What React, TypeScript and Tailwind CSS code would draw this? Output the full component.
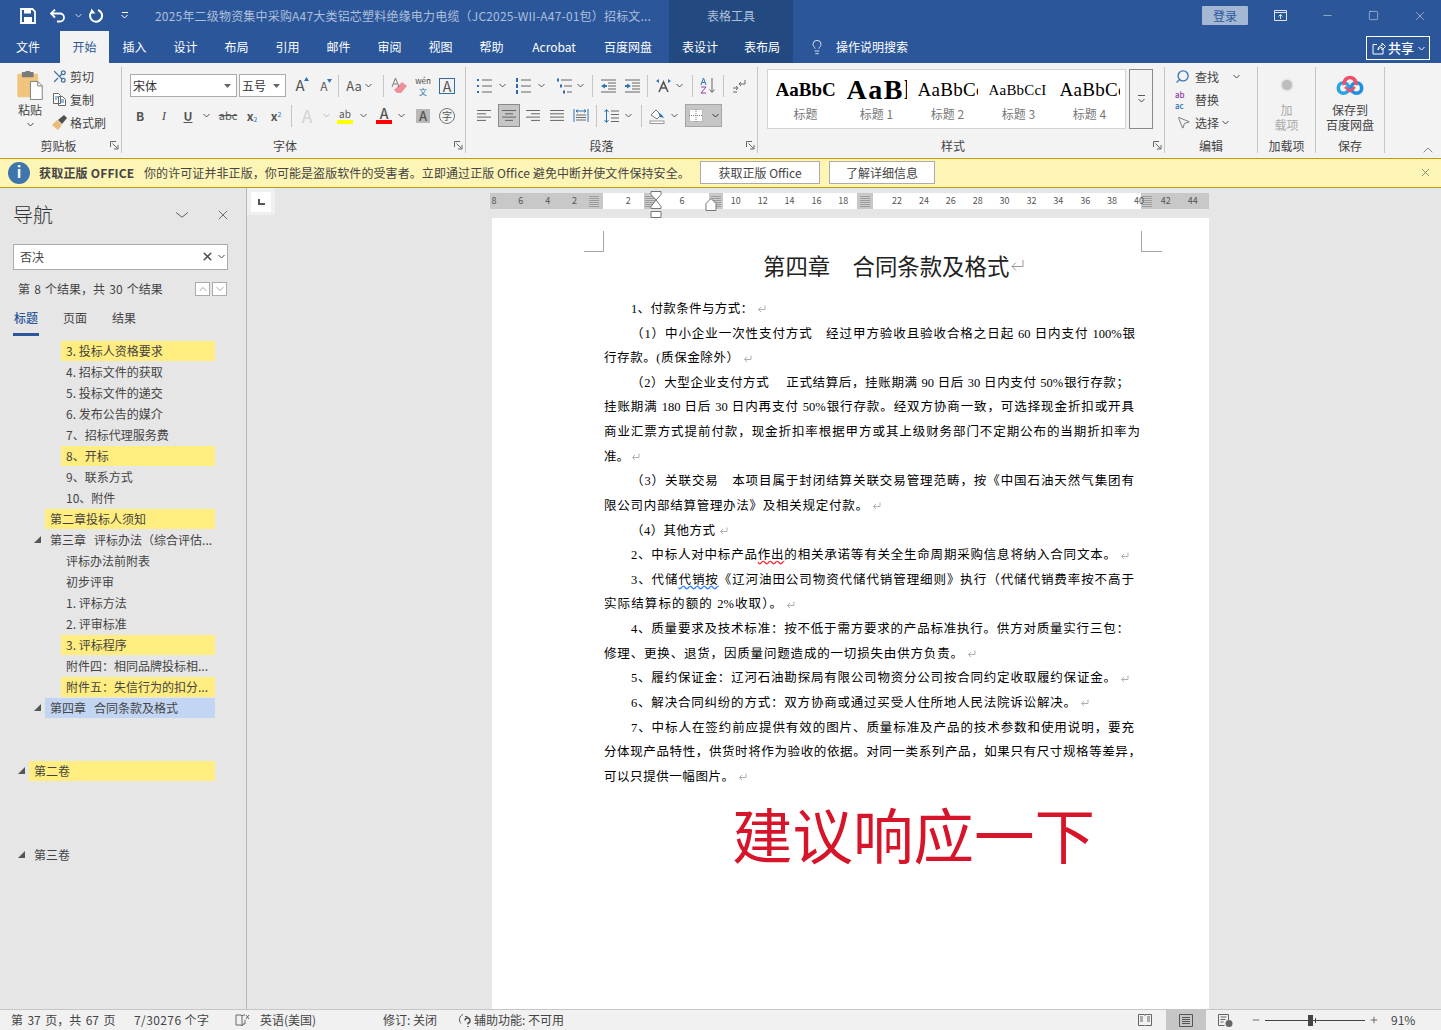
import type { ReactNode } from "react";
import { ChevronDown, ChevronUp, Lightbulb, MousePointer2, Minus, Plus, Scissors, Search, Square, X } from "lucide-react";

const Chev = ({ className = "text-[#555]" }: { className?: string }) => (
    <svg width="7" height="5" viewBox="0 0 7 5" className={className}>
        <path d="M0.5 1l3 3 3-3" fill="none" stroke="currentColor" strokeWidth="1" />
    </svg>
);

const Cell = ({ w = "w-[24px]", className = "", children }: { w?: string; className?: string; children?: ReactNode }) => (
    <div className={`flex h-[23px] shrink-0 items-center justify-center ${w} ${className}`}>{children}</div>
);

const Sep = ({ className = "" }: { className?: string }) => <div className={`h-[22px] w-px shrink-0 bg-[#c6c6c6] ${className}`} />;

const Launcher = () => (
    <svg width="9" height="9" viewBox="0 0 9 9" className="absolute bottom-[3px] right-[2px] text-[#666]">
        <path d="M0.5 6V0.5H6M2.5 2.5L7.5 7.5M8 4V8H4" fill="none" stroke="currentColor" />
    </svg>
);

const Group = ({ width, label, labelCls = "", launcher, children }: { width: string; label: string; labelCls?: string; launcher?: boolean; children: ReactNode }) => (
    <div className={`relative flex h-[86px] shrink-0 flex-col border-r border-[#c6c6c6] ${width}`}>
        <div className="min-h-0 flex-1">{children}</div>
        <div className={`-mb-[3px] h-[20px] text-center text-[12px] leading-[20px] text-[#444] ${labelCls}`}>{label}</div>
        {launcher && <Launcher />}
    </div>
);

const AlignIcon = ({ kind }: { kind: "left" | "center" | "right" | "justify" }) => {
    const rows = {
        left: [[0, 14], [0, 9], [0, 14], [0, 9]],
        center: [[0, 14], [3, 8], [0, 14], [3, 8]],
        right: [[0, 14], [5, 9], [0, 14], [5, 9]],
        justify: [[0, 14], [0, 14], [0, 14], [0, 14]],
    }[kind];
    return (
        <svg width="15" height="13" viewBox="0 0 15 13" className="text-[#666]">
            {rows.map((r, i) => (
                <rect key={i} x={r[0]} y={1 + i * 3.3} width={r[1]} height="1" fill="currentColor" />
            ))}
        </svg>
    );
};

const ListIcon = ({ kind }: { kind: "bullet" | "number" | "multi" }) => (
    <svg width="17" height="16" viewBox="0 0 17 16">
        {[2, 8, 14].map((y, i) => (
            <g key={y}>
                {kind === "bullet" && <rect x="1" y={y - 1} width="2" height="2" fill="#2b6cb0" />}
                {kind === "number" && <rect x="1" y={y - 2} width="2" height="4" fill="#2b6cb0" />}
                {kind === "multi" && <rect x={1 + i * 3} y={y - 1.5} width="2" height="3" fill="#2b6cb0" />}
                <rect x={kind === "multi" ? 5 + i * 3 : 6} y={y - 0.5} width={kind === "multi" ? 11 - i * 3 : 10} height="1" fill="#666" />
            </g>
        ))}
    </svg>
);

const IndentIcon = ({ increase }: { increase?: boolean }) => (
    <svg width="17" height="14" viewBox="0 0 17 14">
        {[1, 4, 7, 10, 13].map((y, i) => (
            <rect key={y} x={i === 0 || i === 4 ? 1 : 8} y={y - 0.5} width={i === 0 || i === 4 ? 15 : 8} height="1" fill="#666" />
        ))}
        <path d={increase ? "M7 7L3 4.5v1.5H1v2h2v1.5z" : "M1 7l4-2.5v1.5h2v2H5v1.5z"} fill="#2f75b5" />
    </svg>
);

const Clipboard = () => (
    <svg width="28" height="29" viewBox="0 0 30 32">
        <rect x="1" y="3" width="23" height="26" rx="1.5" fill="#efc57e" />
        <rect x="6" y="1" width="13" height="6" rx="1" fill="#7a7a7a" />
        <rect x="10" y="0" width="5" height="3" fill="#7a7a7a" />
        <path d="M15.5 11.5h8l5 5v15h-13z" fill="#fff" stroke="#777" />
        <path d="M23.5 11.5v5h5" fill="none" stroke="#777" />
    </svg>
);

const BaiduIcon = () => (
    <svg width="28" height="24" viewBox="0 0 28 24">
        <circle cx="7.5" cy="15" r="5.2" fill="none" stroke="#2aa3e8" strokeWidth="3.6" />
        <circle cx="20.5" cy="15" r="5.2" fill="none" stroke="#1f8fe0" strokeWidth="3.6" />
        <path d="M8.2 12A6 6 0 1 1 19.8 12" fill="none" stroke="#f0506a" strokeWidth="3.6" />
        <path d="M9 14l5 4 5-4" fill="none" stroke="#f0506a" strokeWidth="2.6" />
    </svg>
);

const ClipboardGroup = () => (
    <div className="flex h-full pl-[15px] pt-[4px]">
        <div className="flex w-[30px] flex-col items-center">
            <Clipboard />
            <div className="mt-px text-[12px] leading-[18px] text-[#444]">粘贴</div>
            <Chev className="mt-[3px] text-[#444]" />
        </div>
        <div className="-mt-[6px] ml-[7px] flex flex-col text-[12px] leading-[23px] text-[#444]">
            <div className="flex h-[23px] items-center gap-[3px]">
                <Scissors size={15} className="-scale-x-100 text-[#44729f]" />
                <span>剪切</span>
            </div>
            <div className="flex h-[23px] items-center gap-[3px]">
                <svg width="15" height="15" viewBox="0 0 15 15">
                    <path d="M1.5 1.5h5l2 2v8h-7zM6.5 4.5h4l3 3v6h-7z" fill="#fff" stroke="#666" />
                    <path d="M3 5h3M3 7h2M8 8h4M8 10h4" stroke="#2f75b5" />
                </svg>
                <span>复制</span>
            </div>
            <div className="flex h-[23px] items-center gap-[3px]">
                <svg width="15" height="15" viewBox="0 0 15 15">
                    <path d="M0 10l5-5 5 5-4 5z" fill="#e8bd78" />
                    <path d="M6 5l4 4 5-6-3-3z" fill="#4f4f4f" />
                </svg>
                <span>格式刷</span>
            </div>
        </div>
    </div>
);

const FontGroup = () => (
    <div className="pt-[7px] text-[#555]">
        <div className="flex h-[23px] items-center pl-[8px]">
            <div className="flex h-[23px] w-[107px] items-center justify-between border border-[#ababab] bg-white pl-[2px] pr-[5px] text-[12px] text-[#333]">
                宋体
                <svg width="7" height="4"><path d="M0 0h7L3.5 4z" fill="#666" /></svg>
            </div>
            <div className="ml-[2px] flex h-[23px] w-[47px] items-center justify-between border border-[#ababab] bg-white pl-[2px] pr-[5px] text-[12px] text-[#333]">
                五号
                <svg width="7" height="4"><path d="M0 0h7L3.5 4z" fill="#666" /></svg>
            </div>
            <Cell className="ml-[2px]">
                <span className="relative text-[15px]">A<svg width="5" height="4" className="absolute -right-[4px] top-[3px]"><path d="M0 4h5L2.5 0z" fill="#2f75b5" /></svg></span>
            </Cell>
            <Cell>
                <span className="relative text-[12px]">A<svg width="5" height="4" className="absolute -right-[4px] top-[2px]"><path d="M0 0h5L2.5 4z" fill="#2f75b5" /></svg></span>
            </Cell>
            <Sep className="ml-[2px]" />
            <Cell w="w-[38px]" className="ml-px">
                <span className="text-[13px]">Aa</span>
                <Chev className="ml-[3px] text-[#555]" />
            </Cell>
            <Sep className="ml-[5px]" />
            <Cell className="ml-[3px]">
                <svg width="17" height="17" viewBox="0 0 17 17">
                    <path d="M6 16l-3-3 8-8 5 4-6 7z" fill="#ef8f9c" />
                    <path d="M1 10L4.500 1 8 10M2.500 7h4" fill="none" stroke="#777" />
                </svg>
            </Cell>
            <Cell>
                <div className="flex flex-col items-center text-[8px] leading-[11px]">
                    <span className="text-[#444]">wén</span>
                    <span className="text-[#2f75b5]">文</span>
                </div>
            </Cell>
            <Cell>
                <span className="flex h-[16px] w-[16px] items-center justify-center border border-[#2f6da8] text-[14px] leading-none text-[#555]">A</span>
            </Cell>
        </div>
        <div className="mt-[7px] flex h-[23px] items-center pl-[6px]">
            <Cell><span className="text-[12px] font-bold">B</span></Cell>
            <Cell><span className="text-[13px] italic [font-family:'Liberation_Serif',serif]">I</span></Cell>
            <Cell><span className="text-[12px] font-bold underline">U</span></Cell>
            <Cell w="w-[12px]"><Chev /></Cell>
            <Cell className="ml-[4px]"><span className="text-[11px] line-through">abc</span></Cell>
            <Cell><span className="text-[12px] font-bold">x<sub className="text-[7px] font-normal text-[#2f75b5]">2</sub></span></Cell>
            <Cell><span className="text-[12px] font-bold">x<sup className="text-[7px] font-normal text-[#2f75b5]">2</sup></span></Cell>
            <Sep className="ml-[3px]" />
            <Cell className="ml-[3px]"><span className="text-[17px] font-medium text-[#d6d6d6]">A</span></Cell>
            <Cell w="w-[14px]"><Chev className="text-[#bbb]" /></Cell>
            <Cell>
                <div className="flex flex-col items-center">
                    <span className="text-[10px] leading-[11px]">ab</span>
                    <span className="mt-px h-[4px] w-[16px] bg-[#ffff00]" />
                </div>
            </Cell>
            <Cell w="w-[12px]"><Chev /></Cell>
            <Cell className="ml-[3px]">
                <div className="flex flex-col items-center">
                    <span className="text-[14px] font-medium leading-[13px]">A</span>
                    <span className="h-[4px] w-[16px] bg-[#ff0000]" />
                </div>
            </Cell>
            <Cell w="w-[11px]"><Chev /></Cell>
            <Cell className="ml-[4px]">
                <span className="flex h-[14px] w-[14px] items-center justify-center bg-[#b8b8b8] text-[13px] font-medium leading-none">A</span>
            </Cell>
            <Cell>
                <span className="flex h-[16px] w-[16px] items-center justify-center rounded-full border border-[#777] text-[10px] leading-none">字</span>
            </Cell>
        </div>
    </div>
);

const ParagraphGroup = () => (
    <div className="pt-[7px]">
        <div className="flex h-[23px] items-center pl-[6px]">
            <Cell><ListIcon kind="bullet" /></Cell>
            <Cell w="w-[12px]"><Chev /></Cell>
            <Cell className="ml-[3px]"><ListIcon kind="number" /></Cell>
            <Cell w="w-[12px]"><Chev /></Cell>
            <Cell className="ml-[5px]"><ListIcon kind="multi" /></Cell>
            <Cell w="w-[8px]"><Chev /></Cell>
            <Sep className="ml-[8px]" />
            <Cell className="ml-[3px]"><IndentIcon /></Cell>
            <Cell><IndentIcon increase /></Cell>
            <Sep className="ml-[3px]" />
            <Cell className="ml-[3px]">
                <svg width="17" height="15" viewBox="0 0 17 15">
                    <path d="M4 14L8.5 4 13 14M6 10h5" fill="none" stroke="#555" strokeWidth="1.6" />
                    <path d="M1 3l3-2v4zM16 3l-3-2v4z" fill="#2f75b5" />
                </svg>
            </Cell>
            <Cell w="w-[8px]"><Chev /></Cell>
            <Sep className="ml-[9px]" />
            <Cell className="ml-[3px]">
                <svg width="17" height="17" viewBox="0 0 17 17">
                    <path d="M1 8L3.500 1 6 8M2 5.500h3" fill="none" stroke="#2f75b5" />
                    <path d="M1 10h5L1 16h5" fill="none" stroke="#8e44ad" />
                    <path d="M12 1v14M9.5 12.5L12 15.5l2.5-3" fill="none" stroke="#666" />
                </svg>
            </Cell>
            <Sep className="ml-[3px]" />
            <Cell className="ml-[3px]">
                <svg width="14" height="14" viewBox="0 0 14 14">
                    <path d="M13 1v4H7M9 3L7 5l2 2M1 9h5M4 7l2 2-2 2M1 13h4" fill="none" stroke="#666" />
                </svg>
            </Cell>
        </div>
        <div className="mt-[7px] flex h-[23px] items-center pl-[6px]">
            <Cell><AlignIcon kind="left" /></Cell>
            <Cell w="w-[22px]" className="ml-[2px] border border-[#8a8a8a] bg-[#c6c6c6]"><AlignIcon kind="center" /></Cell>
            <Cell className="ml-px"><AlignIcon kind="right" /></Cell>
            <Cell><AlignIcon kind="justify" /></Cell>
            <Cell>
                <svg width="16" height="15" viewBox="0 0 16 15">
                    <path d="M1 1v13M15 1v13" stroke="#2f75b5" />
                    <path d="M3 3h10M5 1.5L3 3l2 1.5M11 1.5L13 3l-2 1.5" fill="none" stroke="#2f75b5" />
                    <path d="M3 7h10M3 9.500h10M3 12h10" stroke="#666" />
                </svg>
            </Cell>
            <Sep className="ml-[3px]" />
            <Cell w="w-[22px]" className="ml-[4px]">
                <svg width="16" height="16" viewBox="0 0 16 16">
                    <path d="M2.500 2v12M0.500 4L2.500 1.500 4.500 4M0.500 12l2 2.500 2-2.500" fill="none" stroke="#2f75b5" />
                    <path d="M7 3h8M7 6.500h8M7 10h8M7 13.500h8" stroke="#666" />
                </svg>
            </Cell>
            <Cell w="w-[10px]"><Chev /></Cell>
            <Sep className="ml-[8px]" />
            <Cell w="w-[22px]" className="ml-[4px]">
                <svg width="17" height="16" viewBox="0 0 17 16">
                    <path d="M2 7l5-5 5 5-4 4z" fill="#fff" stroke="#777" />
                    <path d="M9 4l4 3 2 3-4-1z" fill="#2f75b5" />
                    <rect x="1" y="13" width="14" height="2.500" fill="#fff" stroke="#999" />
                </svg>
            </Cell>
            <Cell w="w-[12px]"><Chev /></Cell>
            <Cell w="w-[37px]" className="ml-[5px] border border-[#a5a5a5] bg-[#c6c6c6]">
                <svg width="14" height="13" viewBox="0 0 14 13">
                    <rect width="14" height="13" fill="#fff" />
                    <path d="M0.500 0.500h13v12h-13zM7 0v13M0 6.500h14" fill="none" stroke="#777" strokeDasharray="1 1" />
                </svg>
                <Chev className="ml-[9px] text-[#333]" />
            </Cell>
        </div>
    </div>
);

const styleItems = [
    { preview: "AaBbCc", cls: "text-[19px] font-bold", label: "标题" },
    { preview: "AaBl", cls: "text-[28px] font-bold tracking-[1.5px]", label: "标题 1" },
    { preview: "AaBbCc", cls: "text-[19px] tracking-[0.3px]", label: "标题 2" },
    { preview: "AaBbCcI", cls: "text-[15px] tracking-[0.2px]", label: "标题 3" },
    { preview: "AaBbCc", cls: "text-[19px] tracking-[0.3px]", label: "标题 4" },
];

const StylesGroup = () => (
    <div className="flex pl-[9px] pt-[2px]">
        <div className="flex h-[60px] w-[359px] border border-[#d4d4d4] bg-white pl-[2px]">
            {styleItems.map((s, i) => (
                <div key={i} className="flex w-[72px] flex-col items-center">
                    <div className="flex h-[36px] w-[60px] items-center overflow-hidden whitespace-nowrap pt-[4px] text-black [font-family:'Liberation_Serif',serif]">
                        <span className={s.cls}>{s.preview}</span>
                    </div>
                    <div className="text-[12px] leading-[16px] text-[#777]">{s.label}</div>
                </div>
            ))}
        </div>
        <div className="ml-[3px] flex h-[60px] w-[24px] flex-col items-center justify-center border border-[#8a8a8a] bg-[#f3f3f3]">
            <div className="mb-[2px] h-px w-[7px] bg-[#555]" />
            <Chev className="text-[#444]" />
        </div>
    </div>
);

const EditGroup = () => (
    <div className="-mt-[2px] pl-[10px] text-[12px] text-[#444]">
        <div className="flex h-[23px] items-center">
            <Search size={15} strokeWidth={2.2} className="-scale-x-100 text-[#3c78b5]" />
            <span className="ml-[5px]">查找</span>
            <Chev className="ml-[14px]" />
        </div>
        <div className="flex h-[23px] items-center">
            <div className="flex w-[16px] flex-col text-[8px] font-medium leading-[11px]">
                <span className="text-[#8e44ad]">ab</span>
                <span className="text-[#2f75b5]">ac</span>
            </div>
            <span className="ml-[4px]">替换</span>
        </div>
        <div className="flex h-[23px] items-center">
            <MousePointer2 size={15} strokeWidth={1.2} className="ml-px text-[#555]" />
            <span className="ml-[4px]">选择</span>
            <Chev className="ml-[3px]" />
        </div>
    </div>
);

const RibbonStack = ({ icon, lines, muted }: { icon: ReactNode; lines: string[]; muted?: boolean }) => (
    <div className="flex flex-col items-center pt-[6px]">
        <div className="flex h-[24px] items-center">{icon}</div>
        <div className={`mt-[5px] text-center text-[12px] leading-[15px] ${muted ? "text-[#aaa]" : "text-[#444]"}`}>
            {lines.map(l => <div key={l}>{l}</div>)}
        </div>
    </div>
);

const Ribbon = () => (
    <div className="relative flex h-[95px] shrink-0 bg-[#f3f3f3] pt-[4px]">
        <Group width="w-[122px]" label="剪贴板" labelCls="pr-[4px]" launcher><ClipboardGroup /></Group>
        <Group width="w-[344px]" label="字体" labelCls="pr-[17px]" launcher><FontGroup /></Group>
        <Group width="w-[292px]" label="段落" labelCls="pr-[20px]" launcher><ParagraphGroup /></Group>
        <Group width="w-[407px]" label="样式" labelCls="pr-[16px]" launcher><StylesGroup /></Group>
        <Group width="w-[93px]" label="编辑"><EditGroup /></Group>
        <Group width="w-[58px]" label="加载项">
            <RibbonStack muted icon={<div className="h-[10px] w-[10px] rounded-full bg-[#bdbdbd] shadow-[0_0_3px_#bdbdbd]" />} lines={["加", "载项"]} />
        </Group>
        <Group width="w-[69px]" label="保存">
            <RibbonStack icon={<BaiduIcon />} lines={["保存到", "百度网盘"]} />
        </Group>
        <ChevronUp size={16} strokeWidth={1} className="absolute bottom-0 right-[5px] text-[#555]" />
    </div>
);

const Tab = ({ w, children, active }: { w: string; children: ReactNode; active?: boolean }) => (
    <div className={`flex h-full shrink-0 items-center justify-center text-[12px] ${w} ${active ? "bg-[#f3f3f3] text-[#2b579a]" : "text-white"}`}>
        {children}
    </div>
);

const TitleBar = () => (
    <div className="flex h-[31px] shrink-0 items-center bg-[#2b579a] text-white">
        <svg width="16" height="16" viewBox="0 0 16 16" className="ml-[20px]">
            <path d="M1 1h11.500L15 3.500V15H1z" fill="none" stroke="#fff" strokeWidth="1.800" />
            <rect x="4" y="1" width="7" height="4.500" fill="#fff" />
            <rect x="4" y="9" width="8" height="6" fill="#fff" />
        </svg>
        <svg width="16" height="14" viewBox="0 0 16 14" className="ml-[14px]">
            <path d="M1 4.500h9a4 4 0 0 1 0 8H7" fill="none" stroke="#fff" strokeWidth="1.800" />
            <path d="M5 0.500L1 4.500l4 4" fill="none" stroke="#fff" strokeWidth="1.800" />
        </svg>
        <Chev className="ml-[9px] text-[#c8d4e6]" />
        <svg width="15" height="15" viewBox="0 0 15 15" className="ml-[7px]">
            <path d="M4 2.500a6 6 0 1 0 5 -0.500" fill="none" stroke="#fff" strokeWidth="2" />
            <path d="M2 0.500v5h4.500" fill="#fff" />
        </svg>
        <div className="ml-[17px] flex w-[7px] flex-col items-center">
            <div className="mb-px h-px w-[6px] bg-white" />
            <Chev className="text-white" />
        </div>
        <div className="ml-[27px] w-[514px] shrink-0 whitespace-nowrap text-[12px] tracking-[0.19px] text-[#aebfda]">
            2025年二级物资集中采购A47大类铝芯塑料绝缘电力电缆（JC2025-WII-A47-01包）招标文...
        </div>
        <div className="flex h-full w-[124px] shrink-0 items-center justify-center bg-[#234a80] text-[12px] text-[#aebfda]">表格工具</div>
        <div className="ml-[409px] flex h-[19px] w-[46px] shrink-0 items-center justify-center rounded-[1px] bg-[#a5b8d3] text-[12px] text-[#2b579a]">登录</div>
        <svg width="13" height="11" viewBox="0 0 13 11" className="ml-[26px] text-[#dfe6f1]">
            <path d="M0.500 0.500h12v10h-12zM0.500 2.500h12M6.500 9V4.500M4.500 6.500l2-2 2 2" fill="none" stroke="currentColor" />
        </svg>
        <Minus size={13} strokeWidth={1} className="ml-[34px] text-[#dfe6f1]" />
        <Square size={11} strokeWidth={1.2} className="ml-[34px] text-[#dfe6f1]" />
        <X size={14} strokeWidth={1} className="ml-[34px] text-[#dfe6f1]" />
    </div>
);

const TabBar = () => (
    <div className="flex h-[32px] shrink-0 bg-[#2b579a]">
        <Tab w="w-[60px] pr-[4px]">文件</Tab>
        <Tab w="w-[49px]" active>开始</Tab>
        <Tab w="w-[51px]">插入</Tab>
        <Tab w="w-[51px]">设计</Tab>
        <Tab w="w-[51px]">布局</Tab>
        <Tab w="w-[51px]">引用</Tab>
        <Tab w="w-[51px]">邮件</Tab>
        <Tab w="w-[51px]">审阅</Tab>
        <Tab w="w-[51px]">视图</Tab>
        <Tab w="w-[51px]">帮助</Tab>
        <Tab w="w-[74px]">Acrobat</Tab>
        <Tab w="w-[78px] pr-[4px]">百度网盘</Tab>
        <div className="flex h-full w-[124px] shrink-0 bg-[#234a80]">
            <Tab w="w-[62px]">表设计</Tab>
            <Tab w="w-[62px]">表布局</Tab>
        </div>
        <Lightbulb size={16} strokeWidth={1.2} className="ml-[16px] mt-[8px] text-white" />
        <div className="ml-[11px] flex items-center text-[12px] text-white">操作说明搜索</div>
        <div className="ml-[458px] mt-[5px] flex h-[24px] w-[64px] items-center border border-white pl-[5px] text-white">
            <svg width="14" height="14" viewBox="0 0 14 14">
                <path d="M5 3.500H1v9.500h10V8M6 9c0-3 2-4.500 4-4.500V2l3.500 3.500L10 9V6.500C8 6.500 6.500 7.500 6 9z" fill="none" stroke="#fff" />
            </svg>
            <span className="ml-[2px] text-[13px] font-medium">共享</span>
            <Chev className="ml-[4px] text-white" />
        </div>
    </div>
);

const Notice = () => (
    <div className="flex h-[30px] shrink-0 items-center border-y border-[#c39c06] bg-[#fdf5b6] pb-px text-[12px] text-[#444] shadow-[0_-1px_0_#c6c6c6]">
        <div className="ml-[8px] flex h-[22px] w-[22px] items-center justify-center rounded-full bg-[#3f75ad] text-[15px] font-bold text-white">i</div>
        <span className="ml-[9px] w-[105px] whitespace-nowrap font-bold tracking-[0.2px] text-[#444]">获取正版 OFFICE</span>
        <span className="w-[556px] whitespace-nowrap tracking-[0.08px]">你的许可证并非正版，你可能是盗版软件的受害者。立即通过正版 Office 避免中断并使文件保持安全。</span>
        <div className="flex h-[23px] w-[120px] items-center justify-center border border-[#ababab] bg-white">获取正版 Office</div>
        <div className="ml-[9px] flex h-[23px] w-[106px] items-center justify-center border border-[#ababab] bg-white">了解详细信息</div>
        <X size={13} strokeWidth={1.2} className="ml-[484px] text-[#555]" />
    </div>
);

type NavRow = { text: string; level: 1 | 2 | 3; hit?: boolean; current?: boolean; arrow?: boolean; gapBefore?: string };

const navRows: NavRow[] = [
    { text: "3. 投标人资格要求", level: 3, hit: true },
    { text: "4. 招标文件的获取", level: 3 },
    { text: "5. 投标文件的递交", level: 3 },
    { text: "6. 发布公告的媒介", level: 3 },
    { text: "7、招标代理服务费", level: 3 },
    { text: "8、开标", level: 3, hit: true },
    { text: "9、联系方式", level: 3 },
    { text: "10、附件", level: 3 },
    { text: "第二章投标人须知", level: 2, hit: true },
    { text: "第三章   评标办法（综合评估...", level: 2, arrow: true },
    { text: "评标办法前附表", level: 3 },
    { text: "初步评审", level: 3 },
    { text: "1. 评标方法", level: 3 },
    { text: "2. 评审标准", level: 3 },
    { text: "3. 评标程序", level: 3, hit: true },
    { text: "附件四：相同品牌投标相...", level: 3 },
    { text: "附件五：失信行为的扣分...", level: 3, hit: true },
    { text: "第四章   合同条款及格式", level: 2, current: true, arrow: true },
    { text: "第二卷", level: 1, hit: true, arrow: true, gapBefore: "mt-[42px]" },
    { text: "第三卷", level: 1, arrow: true, gapBefore: "mt-[63px]" },
];

const levelPad = { 1: "ml-[29px]", 2: "ml-[45px]", 3: "ml-[61px]" };
const arrowPad = { 1: "ml-[18px]", 2: "ml-[34px]", 3: "ml-[50px]" };

const NavItem = ({ row }: { row: NavRow }) => (
    <div className={`flex h-[21px] items-center ${row.gapBefore ?? ""}`}>
        {row.arrow && (
            <svg width="7" height="7" className={`absolute ${arrowPad[row.level]}`}>
                <path d="M7 0v7H0z" fill="#555" />
            </svg>
        )}
        <div
            className={`flex h-[20px] w-full items-center whitespace-pre pl-[5px] text-[12px] text-[#444] ${levelPad[row.level]} ${row.hit ? "bg-[#ffed7f]" : ""} ${row.current ? "bg-[#c2d5f2]" : ""}`}
        >
            {row.text}
        </div>
    </div>
);

const NavPane = () => (
    <div className="flex w-[247px] shrink-0 flex-col border-r border-[#b9b9b9] bg-[#e6e6e6]">
        <div className="flex h-[52px] items-center pl-[13px] pr-[15px] pt-[2px]">
            <span className="flex-1 text-[20px] font-light text-[#333]">导航</span>
            <ChevronDown size={18} strokeWidth={1} className="mr-[24px] scale-x-125 text-[#444]" />
            <X size={16} strokeWidth={1} className="text-[#333]" />
        </div>
        <div className="mx-[13px] mt-[4px] flex h-[26px] w-[215px] items-center border border-[#ababab] bg-white pb-px pl-[6px] pr-[2px] text-[12px] text-[#444]">
            <span className="flex-1">否决</span>
            <X size={13} strokeWidth={3} className="text-[#555]" />
            <Chev className="ml-[4px]" />
        </div>
        <div className="mt-[6px] flex h-[26px] items-center pl-[18px] text-[12px] text-[#444]">
            <span className="w-[177px] whitespace-nowrap [word-spacing:1.5px]">第 8 个结果，共 30 个结果</span>
            <span className="flex h-[14px] w-[15px] items-center justify-center border border-[#ababab] bg-white"><ChevronUp size={12} strokeWidth={1} /></span>
            <span className="ml-[2px] flex h-[14px] w-[15px] items-center justify-center border border-[#ababab] bg-white"><ChevronDown size={12} strokeWidth={1} /></span>
        </div>
        <div className="mt-[2px] flex h-[32px] pl-[13px] text-[12px] leading-[28px] text-[#444]">
            <span className="h-[32px] w-[26px] border-b-[3px] border-[#2b579a] pl-px font-medium text-[#2b579a]">标题</span>
            <span className="ml-[24px]">页面</span>
            <span className="ml-[25px]">结果</span>
        </div>
        <div className="relative mt-[4px] w-[215px]">
            {navRows.map(r => <NavItem key={r.text} row={r} />)}
        </div>
    </div>
);

const Hatch = ({ className = "" }: { className?: string }) => (
    <div className={`flex h-full w-[12px] shrink-0 items-center justify-center bg-[#c8c8c8] ${className}`}>
        <div className="h-[12px] w-[10px] bg-[repeating-linear-gradient(0deg,#9a9a9a_0_1px,#cfcfcf_1px_2px)]" />
    </div>
);

const rulerMarks = ["8", "6", "4", "2", "", "2", "", "6", "", "10", "12", "14", "16", "18", "", "22", "24", "26", "28", "30", "32", "34", "36", "38", "40", "42", "44"];

const Ruler = () => (
    <div className="relative ml-[243px] mt-[5px] flex h-[16px] w-[719px] shrink-0 bg-[#c8c8c8]">
        <Hatch className="ml-[98px]" />
        <div className="ml-[3px] h-full w-[41px] bg-white" />
        <Hatch />
        <div className="h-full w-[53px] bg-white" />
        <Hatch className="ml-px" />
        <div className="ml-px h-full w-[134px] bg-white" />
        <Hatch className="ml-[2px]" />
        <div className="ml-[2px] h-full w-[268px] bg-white" />
        <Hatch />
        <div className="absolute inset-0 flex">
            {rulerMarks.map((m, i) => (
                <div key={i} className="w-[26.88px] shrink-0 -translate-x-[9.5px] text-center text-[9px] leading-[16px] text-[#555]">{m}</div>
            ))}
        </div>
        <svg width="12" height="27" viewBox="0 0 12 27" className="absolute left-[160px] -top-[2px]">
            <path d="M1 0.500h10v3L6 9 1 3.500zM6 9l5 6.500v2H1v-2zM1 20.500h10v6H1z" fill="#fff" stroke="#777" />
        </svg>
        <svg width="12" height="14" viewBox="0 0 12 14" className="absolute left-[215px] top-[5px]">
            <path d="M6 0.500l5 5v7H1v-7z" fill="#fff" stroke="#777" />
        </svg>
    </div>
);

const ReturnMark = () => (
    <svg width="9" height="8" viewBox="0 0 9 8" className="ml-[4px] shrink-0 text-[#b0b0b0]">
        <path d="M8 0.500V4.500H1.500M4 2L1.500 4.500 4 7" fill="none" stroke="currentColor" />
    </svg>
);

type DocLine = { body: ReactNode; cls: string; mark?: boolean };

const docLines: DocLine[] = [
    { body: "1、付款条件与方式：", cls: "ml-[27px] w-[122px]", mark: true },
    { body: "（1）中小企业一次性支付方式　经过甲方验收且验收合格之日起 60 日内支付 100%银", cls: "ml-[27px] w-[504px]" },
    { body: "行存款。(质保金除外）", cls: "ml-0 w-[135px]", mark: true },
    { body: "（2）大型企业支付方式　 正式结算后，挂账期满 90 日后 30 日内支付 50%银行存款；", cls: "ml-[27px] w-[498px]" },
    { body: "挂账期满 180 日后 30 日内再支付 50%银行存款。经双方协商一致，可选择现金折扣或开具", cls: "ml-0 w-[530px]" },
    { body: "商业汇票方式提前付款，现金折扣率根据甲方或其上级财务部门不定期公布的当期折扣率为", cls: "ml-0 w-[536px]" },
    { body: "准。", cls: "ml-0 w-[23px]", mark: true },
    { body: "（3）关联交易　本项目属于封闭结算关联交易管理范畴，按《中国石油天然气集团有", cls: "ml-[27px] w-[503px]" },
    { body: "限公司内部结算管理办法》及相关规定付款。", cls: "ml-0 w-[264px]", mark: true },
    { body: "（4）其他方式", cls: "ml-[27px] w-[84px]", mark: true },
    {
        body: <>2、中标人对中标产品<span className="underline decoration-red-500 decoration-wavy">作出</span>的相关承诺等有关全生命周期采购信息将纳入合同文本。</>,
        cls: "ml-[27px] w-[485px]",
        mark: true,
    },
    {
        body: <>3、代储<span className="underline decoration-blue-500 decoration-wavy">代销按</span>《辽河油田公司物资代储代销管理细则》执行（代储代销费率按不高于</>,
        cls: "ml-[27px] w-[503px]",
    },
    { body: "实际结算标的额的 2%收取）。", cls: "ml-0 w-[178px]", mark: true },
    { body: "4、质量要求及技术标准：按不低于需方要求的产品标准执行。供方对质量实行三包：", cls: "ml-[27px] w-[498px]" },
    { body: "修理、更换、退货，因质量问题造成的一切损失由供方负责。", cls: "ml-0 w-[359px]", mark: true },
    { body: "5、履约保证金：辽河石油勘探局有限公司物资分公司按合同约定收取履约保证金。", cls: "ml-[27px] w-[485px]", mark: true },
    { body: "6、解决合同纠纷的方式：双方协商或通过买受人住所地人民法院诉讼解决。", cls: "ml-[27px] w-[445px]", mark: true },
    { body: "7、中标人在签约前应提供有效的图片、质量标准及产品的技术参数和使用说明，要充", cls: "ml-[27px] w-[503px]" },
    { body: "分体现产品特性，供货时将作为验收的依据。对同一类系列产品，如果只有尺寸规格等差异，", cls: "ml-0 w-[537px]" },
    { body: "可以只提供一幅图片。", cls: "ml-0 w-[130px]", mark: true },
];

const DocPage = () => (
    <div className="relative ml-[245px] mt-[9px] h-[791px] w-[717px] shrink-0 overflow-hidden bg-white pl-[112px] pt-[30px] text-black">
        <div className="absolute left-[92px] top-[13px] h-[21px] w-[20px] border-b border-r border-[#a5a5a5]" />
        <div className="absolute left-[649px] top-[13px] h-[21px] w-[21px] border-b border-l border-[#a5a5a5]" />
        <div className="ml-[159px] flex h-[34px] items-center text-[22.4px] leading-none text-[#222]">
            <span className="whitespace-pre">第四章　合同条款及格式</span>
            <svg width="14" height="13" viewBox="0 0 14 13" className="ml-px text-[#999]">
                <path d="M13 1V7.500H2M6 3.500L2 7.500 6 11.500" fill="none" stroke="currentColor" />
            </svg>
        </div>
        <div className="mt-[15px] text-[12.5px] [font-family:'Liberation_Serif','Noto_Sans_CJK_SC',serif]">
            {docLines.map((l, i) => (
                <div key={i} className="flex h-[24.63px] items-center">
                    <span className={`block whitespace-nowrap [text-align-last:justify] ${l.cls}`}>{l.body}</span>
                    {l.mark && <ReturnMark />}
                </div>
            ))}
        </div>
        <div className="ml-[128px] mt-[7px] whitespace-nowrap text-[60.5px] leading-[72px] text-[#d7152a]">建议响应一下</div>
    </div>
);

const StatusBar = () => (
    <div className="flex h-[21px] shrink-0 items-center border-t border-[#c6c6c6] bg-[#f1f1f1] text-[12px] text-[#444]">
        <span className="ml-[11px] w-[123px] [word-spacing:1.75px]">第 37 页，共 67 页</span>
        <span className="w-[97px] tracking-[0.4px]">7/30276 个字</span>
        <svg width="15" height="13" viewBox="0 0 15 13" className="ml-[4px] text-[#666]">
            <path d="M6 1H1v10h5l1 1V2zM7 2l1-1h2M10 6v4H8l-1 2" fill="none" stroke="currentColor" />
            <path d="M11 1l3 4M14 1l-3 4" stroke="currentColor" />
        </svg>
        <span className="ml-[10px] w-[123px]">英语(美国)</span>
        <span className="w-[73px]">修订: 关闭</span>
        <svg width="18" height="14" viewBox="0 0 18 14" className="text-[#555]">
            <path d="M7 1.500a5.500 5.500 0 0 0-2 9M9 3.500a3.500 3.500 0 0 1 4 2" fill="none" stroke="currentColor" />
            <path d="M9 7.500a2.500 2.500 0 1 1 3 2.500v1.500M12 13v1" fill="none" stroke="currentColor" strokeWidth="1.5" />
        </svg>
        <span>辅助功能: 不可用</span>
        <div className="ml-auto flex h-full items-center">
            <svg width="14" height="12" viewBox="0 0 14 12" className="text-[#666]">
                <path d="M0.500 0.500h6l0.500 1 0.500-1h6v11h-6L7 11l-0.500 0.500h-6zM2 3h3M2 5h3M2 7h3M9 3h3M9 5h3M9 7h3" fill="none" stroke="currentColor" />
            </svg>
            <div className="ml-[14px] flex h-full w-[40px] items-center justify-center bg-[#c6c6c6]">
                <svg width="14" height="13" viewBox="0 0 14 13" className="text-[#555]">
                    <path d="M0.500 0.500h13v12h-13zM3 3.500h8M3 5.500h8M3 7.500h8M3 9.500h8" fill="none" stroke="currentColor" />
                </svg>
            </div>
            <svg width="15" height="13" viewBox="0 0 15 13" className="ml-[12px] text-[#666]">
                <path d="M0.500 0.500h10v7M0.500 0.500v11h6M2.500 3h6M2.500 5.500h5M2.500 8h3" fill="none" stroke="currentColor" />
                <circle cx="11" cy="9.500" r="3.500" fill="#666" />
            </svg>
            <Minus size={10} className="ml-[18px] text-[#555]" />
            <div className="relative ml-[4px] h-px w-[100px] bg-[#444]">
                <div className="absolute left-[43px] -top-[5px] h-[11px] w-[5px] bg-[#444]" />
                <div className="absolute left-[50px] -top-[2px] h-[5px] w-px bg-[#444]" />
            </div>
            <Plus size={10} className="ml-[4px] text-[#555]" />
            <span className="ml-[12px] w-[50px]">91%</span>
        </div>
    </div>
);

export default function App() {
    return (
        <div className="flex h-[1030px] w-[1441px] flex-col overflow-hidden bg-[#e6e6e6] [font-family:'Noto_Sans_CJK_SC','Noto_Sans',sans-serif]">
            <TitleBar />
            <TabBar />
            <Ribbon />
            <Notice />
            <div className="flex min-h-0 flex-1">
                <NavPane />
                <div className="relative min-w-0 flex-1">
                    <div className="absolute left-0 top-0 flex h-[27px] w-[28px] items-center justify-center bg-[#f0f0f0]">
                        <div className="flex h-[20px] w-[20px] items-center justify-center bg-white">
                            <div className="h-[6px] w-[7px] border-b-2 border-l-2 border-[#555]" />
                        </div>
                    </div>
                    <Ruler />
                    <DocPage />
                </div>
            </div>
            <StatusBar />
        </div>
    );
}
